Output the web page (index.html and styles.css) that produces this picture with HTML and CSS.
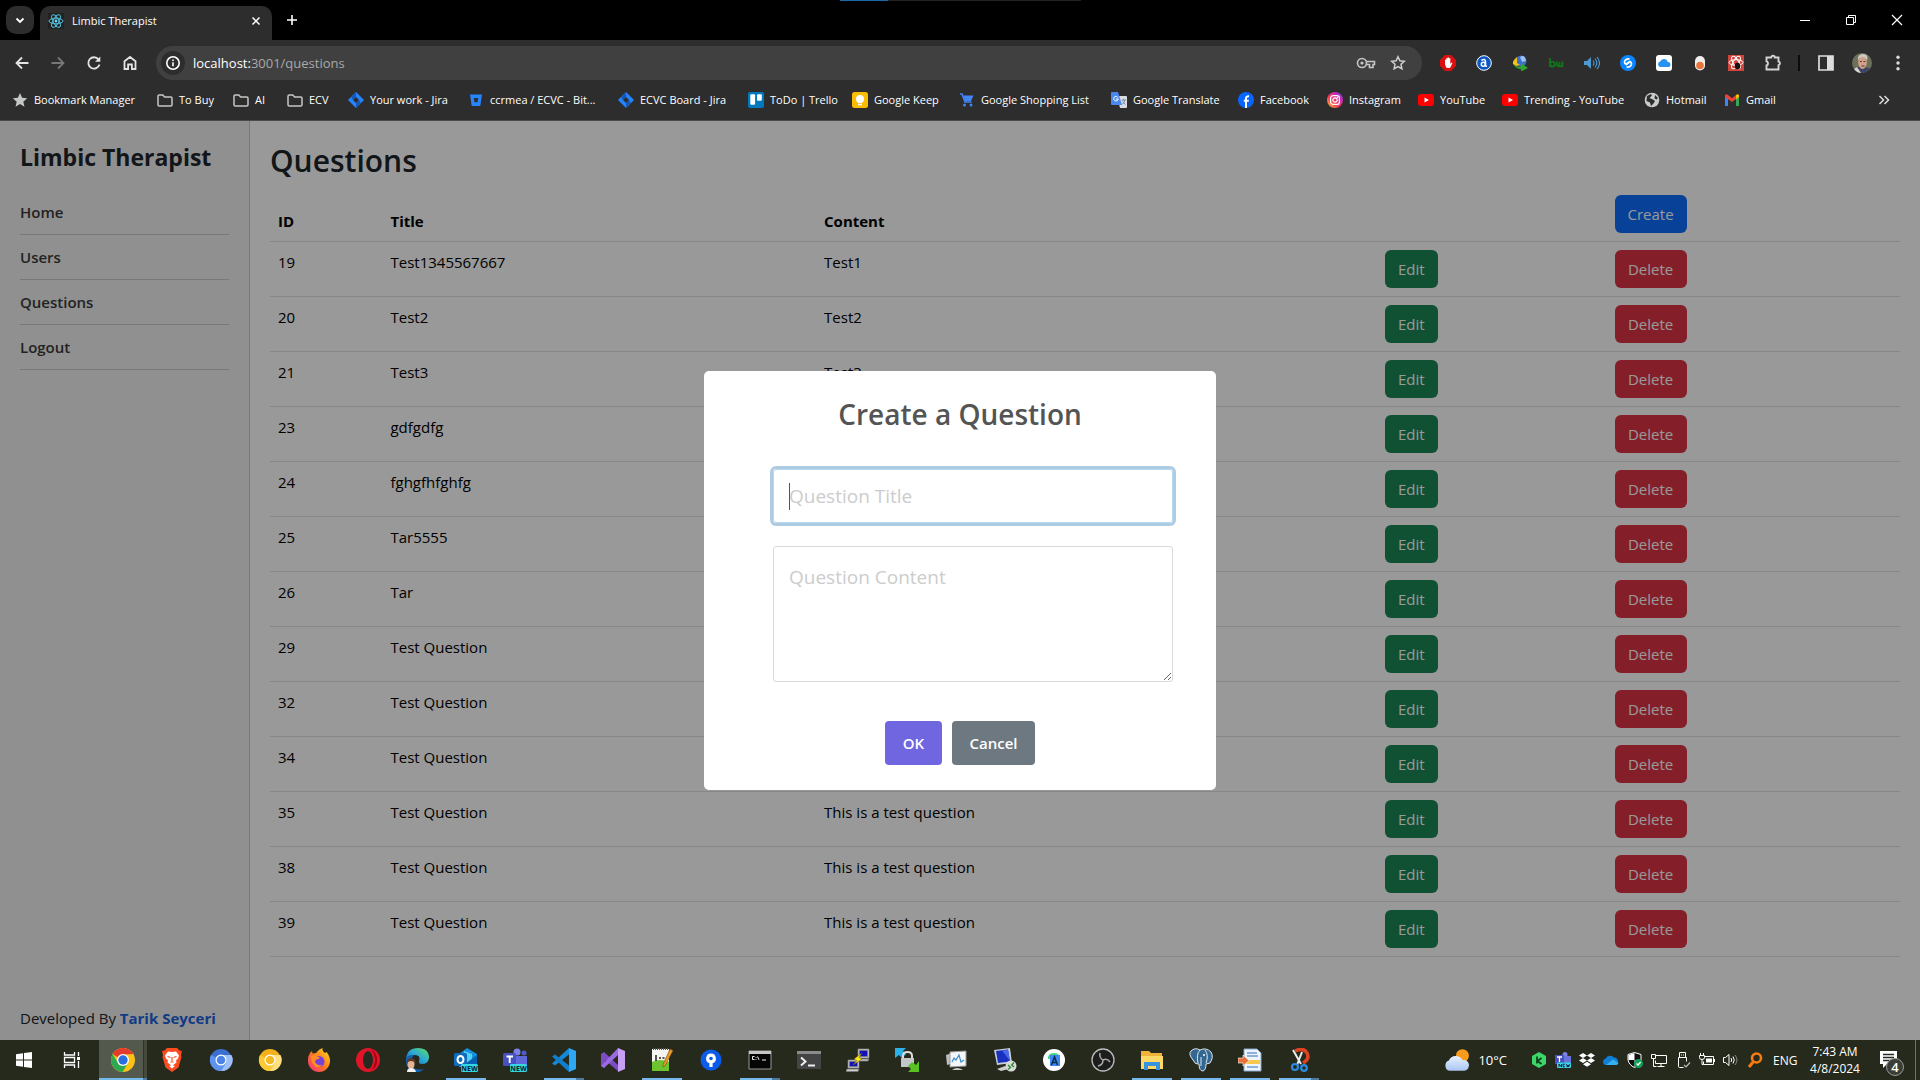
FILE: index.html
```html
<!DOCTYPE html>
<html lang="en">
<head>
<meta charset="utf-8">
<meta name="viewport" content="width=device-width, initial-scale=1">
<title>Limbic Therapist</title>
<link rel="stylesheet" href="styles.css">
</head>
<body>
<svg class="defs" aria-hidden="true">
  <defs>
    <linearGradient id="g-insta" x1="0" y1="1" x2="1" y2="0"><stop offset="0" stop-color="#ffc933"/><stop offset=".4" stop-color="#fb3958"/><stop offset=".7" stop-color="#c72bb0"/><stop offset="1" stop-color="#5b4ff0"/></linearGradient>
    <linearGradient id="g-fox" x1="1" y1="0" x2="0" y2="1"><stop offset="0" stop-color="#ffe226"/><stop offset=".5" stop-color="#ff7a1a"/><stop offset="1" stop-color="#f0288c"/></linearGradient>
    <linearGradient id="g-edge" x1="0" y1="1" x2="1" y2="0"><stop offset="0" stop-color="#0c59a4"/><stop offset=".5" stop-color="#2ba7d8"/><stop offset="1" stop-color="#5fe060"/></linearGradient>
    <linearGradient id="g-cloud" x1="0" y1="0" x2="0" y2="1"><stop offset="0" stop-color="#e8f1ff"/><stop offset="1" stop-color="#a9c4f2"/></linearGradient>
    <symbol id="i-folder" viewBox="0 0 16 16"><path d="M1 4.2Q1 3 2.2 3h3.6l1.8 2h6.2Q15 5 15 6.200v6.600Q15 14 13.800 14H2.200Q1 14 1 12.800Z" fill="none" stroke="#c4c7c5" stroke-width="1.500"/></symbol>
    <symbol id="i-jira" viewBox="0 0 16 16"><path d="M8 0l8 8-8 8-8-8z" fill="#2684ff"/><path d="M8 0v5L5 8 3 5z" fill="#1558bc"/><path d="M8 16v-5l3-3 2 3z" fill="#1558bc"/><path d="M8 5l3 3-3 3-3-3z" fill="#2d2d2d"/></symbol>
    <symbol id="i-youtube" viewBox="0 0 16 16"><rect y="2" width="16" height="12" rx="3" fill="#f00"/><path d="M6.500 5.500v5L11 8z" fill="#fff"/></symbol>
    <symbol id="i-chromium" viewBox="0 0 24 24"><circle cx="12" cy="12" r="11" fill="var(--a)"/><path d="M12 12L2 7A11 11 0 0 0 12 23l5-8z" fill="var(--b)"/><path d="M12 7h10.500A11 11 0 0 1 12 23l5-8z" fill="var(--c)"/><circle cx="12" cy="12" r="5.500" fill="#fff"/><circle cx="12" cy="12" r="4.300" fill="var(--d)"/></symbol>
  </defs>
</svg>

<header class="browser">
  <div class="tabstrip">
    <span class="loading-strip"></span>
    <button class="tab-search" aria-label="Search tabs"><svg viewBox="0 0 12 12"><path d="M2.500 4.500L6 8l3.500-3.500" fill="none" stroke="#fff" stroke-width="1.800"/></svg></button>
    <div class="tab">
      <svg class="ico" viewBox="0 0 16 16"><rect width="16" height="16" rx="1" fill="#222"/><g fill="none" stroke="#53c1de" stroke-width="1"><ellipse cx="8" cy="8" rx="7" ry="2.800"/><ellipse cx="8" cy="8" rx="7" ry="2.800" transform="rotate(60 8 8)"/><ellipse cx="8" cy="8" rx="7" ry="2.800" transform="rotate(120 8 8)"/></g><circle cx="8" cy="8" r="1.400" fill="#61dafb"/></svg>
      <span class="tab-title">Limbic Therapist</span>
      <button class="plain" aria-label="Close tab"><svg viewBox="0 0 12 12"><path d="M2.500 2.500l7 7m0-7l-7 7" stroke="#fff" stroke-width="1.500"/></svg></button>
    </div>
    <button class="plain new-tab" aria-label="New tab"><svg viewBox="0 0 12 12"><path d="M6 1v10M1 6h10" stroke="#fff" stroke-width="1.600"/></svg></button>
    <div class="window-controls">
      <button aria-label="Minimize"><svg viewBox="0 0 12 12"><path d="M1 6.500h10" stroke="#fff"/></svg></button>
      <button aria-label="Restore"><svg viewBox="0 0 12 12"><path d="M1.500 3.500h7v7h-7zM3.500 3.500v-2h7v7h-2" fill="none" stroke="#fff"/></svg></button>
      <button aria-label="Close"><svg viewBox="0 0 12 12"><path d="M1 1l10 10M11 1L1 11" stroke="#fff" stroke-width="1.200"/></svg></button>
    </div>
  </div>

  <div class="toolbar">
    <button aria-label="Back"><svg viewBox="0 0 16 16"><path d="M14.500 8H3M8 2.500L2.500 8 8 13.500" fill="none" stroke="#e3e3e3" stroke-width="1.800"/></svg></button>
    <button aria-label="Forward"><svg viewBox="0 0 16 16"><path d="M1.500 8H13M8 2.500L13.500 8 8 13.500" fill="none" stroke="#777" stroke-width="1.800"/></svg></button>
    <button aria-label="Reload"><svg viewBox="0 0 16 16"><path d="M13.500 9.500A5.700 5.700 0 1 1 12.500 4.400" fill="none" stroke="#e3e3e3" stroke-width="1.800"/><path d="M14.300 1.500v5.300H9z" fill="#e3e3e3"/></svg></button>
    <button aria-label="Home"><svg viewBox="0 0 16 16"><path d="M2.500 6.300L8 2l5.500 4.300V14h-3.600V9.500H6.100V14H2.500z" fill="none" stroke="#e3e3e3" stroke-width="1.800"/></svg></button>
    <div class="omnibox">
      <span class="site-info"><svg viewBox="0 0 16 16"><circle cx="8" cy="8" r="6.200" fill="none" stroke="#fff" stroke-width="1.600"/><path d="M8 7.200v4M8 4.500v1.600" stroke="#fff" stroke-width="1.600"/></svg></span>
      <span class="url"><b>localhost:</b>3001/questions</span>
      <svg class="omni-ico key" viewBox="0 0 20 16"><circle cx="6" cy="8" r="4.500" fill="none" stroke="#c7c7c7" stroke-width="1.600"/><circle cx="6" cy="8" r="1.600" fill="#c7c7c7"/><path d="M10 6.500h8.500v3H17v3h-3.500v-3H10" fill="none" stroke="#c7c7c7" stroke-width="1.600"/></svg>
      <svg class="omni-ico" viewBox="0 0 16 16"><path d="M8 1.800l1.900 4 4.400.5-3.300 3 .9 4.400L8 11.500l-3.900 2.200.9-4.400-3.300-3 4.400-.5z" fill="none" stroke="#d0d0d0" stroke-width="1.500"/></svg>
    </div>
    <div class="extensions">
      <svg viewBox="0 0 16 16"><path d="M5 0h6l5 5v6l-5 5H5l-5-5V5z" fill="#d9100f"/><path d="M5 8.500V4.800h1.200V3.200h1.400v-.8H9v.9h1.300V9l1.200-1.500 1 .6L10 13H6.800Q5 11 5 8.500z" fill="#fff"/></svg>
      <svg viewBox="0 0 16 16"><circle cx="8" cy="8" r="7.300" fill="#0b57c2" stroke="#fff"/><circle cx="7.300" cy="9.300" r="2" fill="none" stroke="#fff" stroke-width="1.500"/><path d="M5.300 5.300Q9.300 3 9.500 6.500V11l1.500.3" fill="none" stroke="#fff" stroke-width="1.500"/></svg>
      <svg viewBox="0 0 16 16"><circle cx="9" cy="6" r="5.500" fill="#3b6fc4"/><path d="M8 2q5-3 6 4l-4 1z" fill="#9cc0ef"/><path d="M5 2Q0 6 1 9l3 2 4-1-3-2z" fill="#f4c21f"/><path d="M1 9q5 4 8 2V8l7 5-7 3.500V14Q4 14 1 9z" fill="#2fa62f"/></svg>
      <svg viewBox="0 0 16 16"><g fill="none" stroke="#12751a" stroke-width="1.800"><path d="M2 3v9"/><circle cx="4.500" cy="9.200" r="2.300"/><path d="M8.800 6.500v3Q9 11.500 11.500 11.300V7v3q.3 1.500 3 1.200V6.500"/></g></svg>
      <svg viewBox="0 0 16 16"><path d="M0 6h3l4-4v12l-4-4H0z" fill="#4c9ad4"/><path d="M9 5.500q2 2.500 0 5M11 3.500q3.500 4.500 0 9M13 2q5 6 0 12" fill="none" stroke="#4c9ad4" stroke-width="1.100"/></svg>
      <svg viewBox="0 0 16 16"><circle cx="8" cy="8" r="8" fill="#0a85ff"/><path d="M9.500 4Q6.500 3.500 4.800 5.800 3.800 8.300 6.300 9.500L9 7.500M6.500 12q3 .5 4.700-1.800Q12.200 7.700 9.700 6.500L7 8.500" fill="none" stroke="#fff" stroke-width="1.600"/></svg>
      <svg viewBox="0 0 16 16"><rect width="16" height="16" rx="3" fill="#fff"/><path d="M4.500 12a2.800 2.800 0 0 1-.3-5.500A4 4 0 0 1 11.800 7a2.500 2.500 0 0 1 .2 5z" fill="#2793f2"/></svg>
      <svg viewBox="0 0 16 16"><rect x="3" y="1" width="10" height="14.500" rx="5" fill="#eee"/><circle cx="8" cy="10.500" r="3.800" fill="#e8763a"/></svg>
      <svg viewBox="0 0 16 16"><path d="M0 0h16v16H0z" fill="#d0463d"/><g fill="none" stroke="#fff"><ellipse cx="8" cy="7.500" rx="7" ry="2.800"/><ellipse cx="8" cy="7.500" rx="7" ry="2.800" transform="rotate(60 8 7.500)"/><ellipse cx="8" cy="7.500" rx="7" ry="2.800" transform="rotate(120 8 7.500)"/></g><ellipse cx="9.500" cy="11" rx="2.800" ry="3.300" fill="#1d1010"/></svg>
      <svg class="puzzle" viewBox="0 0 18 18"><path d="M2.500 3.500h4.700a1.800 1.800 0 0 1 3.600 0h3.700v4a1.900 1.900 0 0 1 0 3.700v4.300h-12v-4a2.200 2.200 0 0 0 0-4.200z" fill="none" stroke="#d3d3d3" stroke-width="1.900"/></svg>
    </div>
    <span class="divider"></span>
    <div class="profile">
      <svg viewBox="0 0 16 16"><path d="M1 1h14v14H1z" fill="none" stroke="#ddd" stroke-width="1.700"/><path d="M9 1h6v14H9z" fill="#ddd"/></svg>
      <svg class="avatar" viewBox="0 0 20 20"><circle cx="10" cy="10" r="10" fill="#6f7059"/><path d="M2 16q3-3 7-2l9 1q-3 5-8 5t-8-4z" fill="#3d4566"/><path d="M5 14l4 6q-4 0-7-4z" fill="#d9d4cc"/><ellipse cx="10.500" cy="9.500" rx="4.300" ry="6.500" fill="#d0a08a"/><path d="M6 8Q5 1 11 1t4 7q-1-4-4.500-4T6 8z" fill="#cfcac2"/><path d="M8 8.500h1.800M11.500 8.500h1.800M9.500 13h3" stroke="#5a3629"/></svg>
      <svg viewBox="0 0 16 16"><g fill="#ddd"><circle cx="8" cy="2.300" r="1.700"/><circle cx="8" cy="8" r="1.700"/><circle cx="8" cy="13.700" r="1.700"/></g></svg>
    </div>
  </div>

  <nav class="bookmarks" aria-label="Bookmarks">
    <a href="#"><svg class="ico" viewBox="0 0 16 16"><path d="M8 1l2.100 4.800 5.100.5-3.900 3.400 1.200 5.100L8 12.100l-4.500 2.700 1.200-5.100L.8 6.300l5.100-.5z" fill="#c4c7c5"/></svg>Bookmark Manager</a>
    <a href="#"><svg class="ico"><use href="#i-folder"/></svg>To Buy</a>
    <a href="#"><svg class="ico"><use href="#i-folder"/></svg>AI</a>
    <a href="#"><svg class="ico"><use href="#i-folder"/></svg>ECV</a>
    <a href="#"><svg class="ico"><use href="#i-jira"/></svg>Your work - Jira</a>
    <a href="#"><svg class="ico" viewBox="0 0 16 16"><path d="M2 2.500h12L12.300 14H3.700z" fill="#2684ff"/><path d="M5.800 6h4.500l-.8 4.200h-3z" fill="#2d2d2d"/></svg>ccrmea / ECVC - Bit...</a>
    <a href="#"><svg class="ico"><use href="#i-jira"/></svg>ECVC Board - Jira</a>
    <a href="#"><svg class="ico" viewBox="0 0 16 16"><rect width="16" height="16" rx="2" fill="#0079bf"/><rect x="2.300" y="2.300" width="4.800" height="10.500" rx="1" fill="#fff"/><rect x="9" y="2.300" width="4.800" height="6.500" rx="1" fill="#fff"/></svg>ToDo | Trello</a>
    <a href="#"><svg class="ico" viewBox="0 0 16 16"><rect width="16" height="16" rx="2.500" fill="#fbbc04"/><circle cx="8" cy="7" r="4" fill="#fff"/><path d="M6 12h4v1.300H6zM6 9h4v2.300H6z" fill="#fff"/></svg>Google Keep</a>
    <a href="#"><svg class="ico" viewBox="0 0 16 16"><path d="M4 3.500h10.500L12 9H6z" fill="#4285f4"/><path d="M1 2h2l3 8h6.500" fill="none" stroke="#4285f4" stroke-width="1.500"/><circle cx="5.500" cy="13" r="1.500" fill="#4285f4"/><circle cx="12" cy="13" r="1.500" fill="#4285f4"/></svg>Google Shopping List</a>
    <a href="#"><svg class="ico" viewBox="0 0 16 16"><path d="M6 4h9q1 0 1 1v10q0 1-1 1H9z" fill="#d9dce0"/><path d="M1 0h6l4 13H1q-1 0-1-1V1q0-1 1-1z" fill="#4a87f0"/><path d="M7 5.500A2.300 2.300 0 1 0 7.300 7H5" fill="none" stroke="#fff"/><path d="M10.500 8h4.500M12.700 6.800V8M14 8q-1 3-3 4.500M11.500 9.500l3 3" stroke="#6a7a90" fill="none" stroke-width=".8"/></svg>Google Translate</a>
    <a href="#"><svg class="ico" viewBox="0 0 16 16"><circle cx="8" cy="8" r="8" fill="#0866ff"/><path d="M8 16V6.500Q8 4 11 4.300M5.800 8.700h5" fill="none" stroke="#fff" stroke-width="2"/></svg>Facebook</a>
    <a href="#"><svg class="ico" viewBox="0 0 16 16"><circle cx="8" cy="8" r="8" fill="url(#g-insta)"/><g fill="none" stroke="#fff" stroke-width="1.200"><rect x="3.600" y="3.600" width="8.800" height="8.800" rx="2.500"/><circle cx="8" cy="8" r="2.200"/></g><circle cx="10.500" cy="5.400" r=".7" fill="#fff"/></svg>Instagram</a>
    <a href="#"><svg class="ico"><use href="#i-youtube"/></svg>YouTube</a>
    <a href="#"><svg class="ico"><use href="#i-youtube"/></svg>Trending - YouTube</a>
    <a href="#"><svg class="ico" viewBox="0 0 16 16"><circle cx="8" cy="8" r="7.300" fill="#c9cccd"/><path d="M3 4l4-2 1 1.500L5.500 6 9 7.500 11 9l-1.500 2.500L7 14 6 10.500 2.500 9zM11 3l3 3-1.500 1.500-2-1z" fill="#2d2d2d"/></svg>Hotmail</a>
    <a href="#"><svg class="ico" viewBox="0 0 16 16"><path d="M1 4v10h3V7z" fill="#4285f4"/><path d="M15 4v10h-3V7z" fill="#34a853"/><path d="M1 3q1.500-1.500 3 0l4 3.200V10L1 5z" fill="#ea4335"/><path d="M8 6.200L12 3v4L8 10z" fill="#ea4335"/><path d="M12 3q1.500-1.500 3 0v2l-3 2.200z" fill="#fbbc04"/></svg>Gmail</a>
    <button class="plain more" aria-label="More bookmarks"><svg viewBox="0 0 12 12"><path d="M1.500 2L5.500 6l-4 4M6.500 2l4 4-4 4" fill="none" stroke="#ddd" stroke-width="1.500"/></svg></button>
  </nav>
</header>

<div class="page">
  <aside class="sidebar">
    <h2>Limbic Therapist</h2>
    <nav class="menu">
      <a href="#">Home</a>
      <a href="#">Users</a>
      <a href="#">Questions</a>
      <a href="#">Logout</a>
    </nav>
    <p class="credit">Developed By <a href="#">Tarik Seyceri</a></p>
  </aside>

  <main class="content">
    <h1>Questions</h1>
    <table class="table">
      <thead>
        <tr><th class="col-id">ID</th><th class="col-title">Title</th><th class="col-content">Content</th><th class="col-edit"></th><th class="col-delete"><button class="btn create">Create</button></th></tr>
      </thead>
      <tbody>
        <tr><td>19</td><td>Test1345567667</td><td>Test1</td><td><button class="btn edit">Edit</button></td><td><button class="btn delete">Delete</button></td></tr>
        <tr><td>20</td><td>Test2</td><td>Test2</td><td><button class="btn edit">Edit</button></td><td><button class="btn delete">Delete</button></td></tr>
        <tr><td>21</td><td>Test3</td><td>Test3</td><td><button class="btn edit">Edit</button></td><td><button class="btn delete">Delete</button></td></tr>
        <tr><td>23</td><td>gdfgdfg</td><td></td><td><button class="btn edit">Edit</button></td><td><button class="btn delete">Delete</button></td></tr>
        <tr><td>24</td><td>fghgfhfghfg</td><td></td><td><button class="btn edit">Edit</button></td><td><button class="btn delete">Delete</button></td></tr>
        <tr><td>25</td><td>Tar5555</td><td></td><td><button class="btn edit">Edit</button></td><td><button class="btn delete">Delete</button></td></tr>
        <tr><td>26</td><td>Tar</td><td></td><td><button class="btn edit">Edit</button></td><td><button class="btn delete">Delete</button></td></tr>
        <tr><td>29</td><td>Test Question</td><td></td><td><button class="btn edit">Edit</button></td><td><button class="btn delete">Delete</button></td></tr>
        <tr><td>32</td><td>Test Question</td><td></td><td><button class="btn edit">Edit</button></td><td><button class="btn delete">Delete</button></td></tr>
        <tr><td>34</td><td>Test Question</td><td></td><td><button class="btn edit">Edit</button></td><td><button class="btn delete">Delete</button></td></tr>
        <tr><td>35</td><td>Test Question</td><td>This is a test question</td><td><button class="btn edit">Edit</button></td><td><button class="btn delete">Delete</button></td></tr>
        <tr><td>38</td><td>Test Question</td><td>This is a test question</td><td><button class="btn edit">Edit</button></td><td><button class="btn delete">Delete</button></td></tr>
        <tr><td>39</td><td>Test Question</td><td>This is a test question</td><td><button class="btn edit">Edit</button></td><td><button class="btn delete">Delete</button></td></tr>
      </tbody>
    </table>
  </main>

  <div class="backdrop">
    <form class="modal" role="dialog" aria-labelledby="modal-title">
      <h2 id="modal-title">Create a Question</h2>
      <div class="fields">
        <input class="focused" type="text" placeholder="Question Title" aria-label="Question Title">
        <textarea placeholder="Question Content" aria-label="Question Content"></textarea>
      </div>
      <div class="actions">
        <button type="button" class="ok">OK</button>
        <button type="button" class="cancel">Cancel</button>
      </div>
    </form>
  </div>
</div>

<footer class="taskbar">
  <div class="system">
    <button aria-label="Start"><svg viewBox="0 0 24 24"><path d="M4 6.300l7-1v6.200H4zM12 5.100l8-1.100v7.500h-8zM4 12.500h7v6.200l-7-1zM12 12.500h8V20l-8-1.100z" fill="#fff"/></svg></button>
    <button aria-label="Task view"><svg viewBox="0 0 24 24"><path d="M4.500 4v3h10V4M4.500 9.500h10v5h-10zM4.500 20v-3h10v3M18.500 4v4M18.500 13v7" fill="none" stroke="#fff" stroke-width="1.300"/><path d="M17 9h3v3h-3z" fill="#fff"/></svg></button>
  </div>
  <div class="apps">
    <button class="active" aria-label="Chrome"><svg viewBox="0 0 24 24"><circle cx="12" cy="12" r="12" fill="#fbc116"/><path d="M1.600 6A12 12 0 0 1 22.400 6L12 6.500 7 9.500z" fill="#e33b2e"/><path d="M1.600 6A12 12 0 0 0 11.500 24l5.500-9-5 3-5-3z" fill="#2da94f"/><circle cx="12" cy="12" r="6" fill="#fff"/><circle cx="12" cy="12" r="4.700" fill="#2a6fe0"/></svg></button>
    <button aria-label="Brave"><svg viewBox="0 0 24 24"><path d="M7 0h10l2.500 2.500L22 3l-1 4 .5 2-3 10.500L12 24l-6.500-4.500L2.500 9 3 7 2 3l2.500-.5z" fill="#fb4b1f"/><path d="M12 4l4-.5 3 4-1 3-2 2 .5 2L12 18l-4.500-3.500.5-2-2-2-1-3 3-4zM9 18l3-1 3 1-3 2.500z" fill="#fff"/><path d="M7.500 8.500l3 1M16.500 8.500l-3 1M10.500 14h3M12 9v4" stroke="#fb4b1f" stroke-width="1.200"/></svg></button>
    <button aria-label="Chromium"><svg class="chromium-blue"><use href="#i-chromium"/></svg></button>
    <button aria-label="Chrome Canary"><svg class="chromium-gold"><use href="#i-chromium"/></svg></button>
    <button aria-label="Firefox"><svg viewBox="0 0 24 24"><path d="M3 5l2-2 .5 2.500L9 5Q12 1 15.500 0 15 3 18 5l1.500-1Q23 8 23 13A11 11 0 0 1 1 13Q.8 8 3 5z" fill="url(#g-fox)"/><circle cx="12" cy="13.500" r="5.500" fill="#7542d8"/><path d="M4 8q4-2 6 .5l3 1q-1 2-3.500 2Q7 13 9 15.500q3 3 6.500 1Q13 20 9 19 4 16 4 8z" fill="#ff8a2a"/></svg></button>
    <button aria-label="Opera"><svg viewBox="0 0 24 24"><circle cx="12" cy="12" r="12" fill="#e0152a"/><path d="M14 1a12 12 0 0 1 0 22q5-4 5-11T14 1z" fill="#a70014"/><ellipse cx="12" cy="12" rx="5" ry="9" fill="#272b1f"/></svg></button>
    <button aria-label="Edge"><svg viewBox="0 0 24 24"><path d="M1 11Q2 0 13 0t11 10q-1 6-7 6-4 0-3-3 2-6-4-6Q4 7 1 11z" fill="url(#g-edge)"/><path d="M1 11q1-4 8-4-4 4-2 10t12 4Q15 25 10 24 0 21 1 11z" fill="#1162b3"/><ellipse cx="6" cy="16" rx="3.500" ry="4.500" fill="#e5b394"/><path d="M2 16q-1-6 4-6t4.500 6Q9 13 6 13t-4 3z" fill="#5a3a2a"/><path d="M2 24q0-4 4-4t5 4z" fill="#f3f0ee"/></svg></button>
    <button class="open" aria-label="Outlook"><svg viewBox="0 0 24 24"><path d="M5 6l8-6 10 6v13H5z" fill="#1490df"/><path d="M10 3l8 3v10H10z" fill="#50d0f5"/><path d="M23 7v13l-12-4z" fill="#0a5fb5"/><rect y="5" width="13" height="13" rx="1.500" fill="#0f6cbd"/><ellipse cx="6.500" cy="11.500" rx="3" ry="3.600" fill="none" stroke="#fff" stroke-width="2"/><rect x="7" y="16" width="17" height="8" rx="1.500" fill="#35d7e3"/><text x="15.500" y="22.500" class="badge-text">NEW</text></svg></button>
    <button aria-label="Teams"><svg viewBox="0 0 24 24"><circle cx="14" cy="4" r="3.500" fill="#7b83eb"/><circle cx="21" cy="5" r="2.500" fill="#5059c9"/><path d="M9 8h15v10q-2 4-8 3-6 0-7-5z" fill="#5f68d8"/><rect y="5" width="13" height="13" rx="1.500" fill="#4650c0"/><path d="M3.500 8.500h6.500M6.700 8.500V15" stroke="#fff" stroke-width="1.900"/><rect x="7" y="16" width="17" height="8" rx="1.500" fill="#35d7e3"/><text x="15.500" y="22.500" class="badge-text">NEW</text></svg></button>
    <button class="open multi" aria-label="Visual Studio Code"><svg viewBox="0 0 24 24"><path d="M17 0v6.500L3 17.500 0 15.500z" fill="#1688d6"/><path d="M17 24v-6.500L3 6.500 0 8.500z" fill="#0f7fce"/><path d="M17 0l7 3v18l-7 3z" fill="#2fa8f3"/></svg></button>
    <button aria-label="Visual Studio"><svg viewBox="0 0 24 24"><path d="M0 6l3-2 15 14v6L4 12v8l-4-2z" fill="#7b4cc4"/><path d="M0 18L17 0v7L3 20z" fill="#9a6ae0"/><path d="M17 0l7 3v18l-7 3z" fill="#c7a0f5"/></svg></button>
    <button class="open" aria-label="Notepad++"><svg viewBox="0 0 24 24"><path d="M2 1h17v22H2z" fill="#f4f6ef"/><path d="M2 14q8-4 17 0v9H2z" fill="#6cc52e"/><path d="M3 1h15" stroke="#555" stroke-width="2" stroke-dasharray="1 1"/><path d="M6 7v6M9 10h2M12.500 10h2" stroke="#222" stroke-width="1.500"/><path d="M20 1l3 1.500L15 18l-2 1v-2.500z" fill="#e99a2b" stroke="#7a4c14" stroke-width=".6"/></svg></button>
    <button aria-label="Sourcetree"><svg viewBox="0 0 24 24"><circle cx="12" cy="12" r="10.500" fill="#0b5ce8"/><path d="M12 5.500a5 5 0 0 1 1.600 9.700V19h-3.200v-3.800A5 5 0 0 1 12 5.500z" fill="#fff"/><circle cx="12" cy="10.500" r="1.800" fill="#0b5ce8"/></svg></button>
    <button class="open multi" aria-label="Command Prompt"><svg viewBox="0 0 24 24"><path d="M1 3h22v18H1z" fill="#050505" stroke="#999"/><path d="M1 3h22v3H1z" fill="#c5c5c5"/><path d="M6.500 8.500H4.500v3h2M8 9v.8M8 11v.8M9.500 8.500l1.500 3.300M14 12h4" fill="none" stroke="#eee"/></svg></button>
    <button aria-label="Terminal"><svg viewBox="0 0 24 24"><path d="M0 3h24v18H0z" fill="#444"/><path d="M0 3h24v3H0z" fill="#8b8b8b"/><path d="M4 9.500l4.500 4-4.500 4M11 17.500h7" fill="none" stroke="#eee" stroke-width="2"/></svg></button>
    <button aria-label="PuTTY"><svg viewBox="0 0 24 24"><g stroke="#777" stroke-width=".8"><path d="M12 1h11v9H12z" fill="#ddd"/><path d="M13.500 2.500h8v6h-8z" fill="#1212b8"/><path d="M14 11h9l-1 2H13z" fill="#ccc"/><path d="M2 12h11v8H2z" fill="#ddd"/><path d="M3.500 13.500h8v5h-8z" fill="#1212b8"/><path d="M1 21h12l-1 2.500H0z" fill="#ccc"/></g><path d="M16 5l-8 6 3 1.500L7 17l9-6-3-1.500z" fill="#ffec1a" stroke="#665c00" stroke-width=".5"/></svg></button>
    <button aria-label="WinSCP"><svg viewBox="0 0 24 24"><path d="M0 0h11L8 3l3 3-4 4-3-3-4 3z" fill="#2cb0e8"/><path d="M8 11V8q0-4 4.500-4T17 8v3" fill="none" stroke="#ddd" stroke-width="2"/><path d="M6 10h13v9H6z" fill="#c4c7ca"/><path d="M24 24H13l3-3-3-3 4-4 4 3 3-4z" fill="#58c322"/></svg></button>
    <button aria-label="Resource Monitor"><svg viewBox="0 0 24 24"><path d="M2 7l12-4 2 10-13 4z" fill="#bdbfc2"/><path d="M6 4l16-1v15L6 19z" fill="#f4f6f8" stroke="#999"/><path d="M8 14l2-4 2 2 3-5 2 7 3-2" fill="none" stroke="#3a8fd0" stroke-width="1.200"/><path d="M8 22q5-4 11 0z" fill="#ccc"/></svg></button>
    <button aria-label="Remote Desktop"><svg viewBox="0 0 24 24"><path d="M1 2l16-2 2 15-15 2z" fill="#c9ced6"/><path d="M3 3l12-1.500L17 13.500 5 15z" fill="#1730c0"/><path d="M9 2.500l6-1L17 13z" fill="#4968e8"/><path d="M4 21l8-3 4 3-8 2z" fill="#ccc"/><circle cx="18" cy="18" r="5.500" fill="#d8dcd8"/><path d="M15 17l2.500 2.500-2.500 2M21 14.500L18.700 17l2.300 2" fill="none" stroke="#2f8a2f" stroke-width="1.400"/></svg></button>
    <button aria-label="Android Studio"><svg viewBox="0 0 24 24"><circle cx="12" cy="12" r="11" fill="#fff"/><path d="M6 9q1-4 6-4t6 4v2H6z" fill="#3ddc84"/><path d="M8 7h10v11H8z" fill="#4285f4"/><path d="M9.500 17l3-8 3 8M10.500 14.500h4" fill="none" stroke="#073042" stroke-width="1.500"/></svg></button>
    <button aria-label="OBS Studio"><svg viewBox="0 0 24 24"><circle cx="12" cy="12" r="11" fill="#1d1d1d" stroke="#bbb" stroke-width="1.300"/><g fill="none" stroke="#aaa" stroke-width="1.500"><path d="M12 12Q8 10 9 5M12 12q4-2 7 2M12 12q0 5-5 6"/></g></svg></button>
    <button class="open" aria-label="File Explorer"><svg viewBox="0 0 24 24"><path d="M1 3h8l2 2h11v16H1z" fill="#eeb33a"/><path d="M1 8h22v13H1z" fill="#ffd868"/><path d="M4 22v-8h16v8h-4v-4H8v4z" fill="#3793dd"/></svg></button>
    <button class="open" aria-label="PostgreSQL"><svg viewBox="0 0 24 24"><path d="M2 3Q6-1 11 2q6-3 11 2 3 5-1 11l-4 1q0 6-3 7-4 0-4-7-4 1-6-4Q-1 6 2 3z" fill="#336791" stroke="#dfe8ef"/><path d="M11 2q-4 4-2 13M16 2q4 5 1 13M12 9v9" fill="none" stroke="#dfe8ef"/><circle cx="15" cy="7" r="1" fill="#fff"/></svg></button>
    <button class="open" aria-label="File transfer"><svg viewBox="0 0 24 24"><path d="M6 1h13l4 4v18H6z" fill="#eef4fb" stroke="#86a9cf"/><path d="M9 5h10M9 8h11M9 19h11" stroke="#6d9bd0" stroke-width="1.500"/><path d="M7 12h15v4H7z" fill="#f7c84c"/><path d="M0 10h5V7l6 5.500L5 18v-3H0z" fill="#e9703a" stroke="#fff" stroke-width=".6"/></svg></button>
    <button class="open multi" aria-label="Snipping tool"><svg viewBox="0 0 24 24"><path d="M8 3Q17-1 20 5t-4 10" fill="none" stroke="#dd4322" stroke-width="3.500"/><path d="M6 2l8 14M15 4l-5 13" stroke="#e9edf0" stroke-width="2"/><circle cx="8" cy="19" r="3" fill="none" stroke="#2b8ce0" stroke-width="2.200"/><circle cx="17" cy="20" r="2.800" fill="none" stroke="#2b8ce0" stroke-width="2.200"/></svg></button>
  </div>
  <div class="weather">
    <svg viewBox="0 0 24 24"><circle cx="17" cy="8" r="6" fill="#f99b1d"/><path d="M5 22a5 5 0 0 1-.5-9.500A7 7 0 0 1 17 12a5 5 0 0 1 2 10z" fill="url(#g-cloud)"/></svg>
    <span>10°C</span>
  </div>
  <div class="tray">
    <svg viewBox="0 0 16 16"><path d="M8 0l7 4v8l-7 4-7-4V4z" fill="#3dd668"/><path d="M6 4.500v7M10.500 6L6.500 9l4 3" fill="none" stroke="#0c3a1a" stroke-width="1.700"/></svg>
    <svg viewBox="0 0 16 16"><circle cx="10" cy="2.500" r="2.500" fill="#7b83eb"/><path d="M6 4h10v8H6z" fill="#6a72dc"/><path d="M0 3h9v9H0z" fill="#4650c0"/><path d="M2 5h5M4.500 5v5" stroke="#fff" stroke-width="1.300"/><rect x="2" y="10.500" width="14" height="5.500" rx="1" fill="#35d7e3"/><path d="M4 15v-3l2.500 3v-3M10 12.200H8v2.600h2M11.500 12l.8 3 .7-2 .7 2 .8-3" fill="none" stroke="#103" stroke-width=".8"/></svg>
    <svg viewBox="0 0 16 16"><path d="M4 1l4 2.500L4 6 0 3.500zM12 1l4 2.500L12 6 8 3.500zM4 6l4 2.500L4 11 0 8.500zM12 6l4 2.500-4 2.500-4-2.500zM8 9.800l4 2.400L8 14.700l-4-2.500z" fill="#fff"/></svg>
    <svg viewBox="0 0 16 16"><path d="M3 13a3.300 3.300 0 0 1-.3-6.500A5 5 0 0 1 11 5.500 4 4 0 0 1 13 13z" fill="#0f7fd6"/><path d="M3 13l7-5.500 5.500 3.500Q15 13 13 13z" fill="#35b1f3"/></svg>
    <svg viewBox="0 0 16 16"><path d="M7.500.5l6.500 2V8q-1 5-6.500 7.500Q2 13 1 8V2.500z" fill="#111" stroke="#fff"/><path d="M7.500 1v7H1.500V3zM7.500 8h6q-1 4.500-6 7z" fill="#fff"/><circle cx="11.500" cy="11.500" r="4.500" fill="#13a05a"/><path d="M9.500 11.500l1.500 1.500 2.700-3" fill="none" stroke="#fff" stroke-width="1.300"/></svg>
    <svg viewBox="0 0 16 16"><path d="M4.500 3.500h11v8h-11v-3M10 11.500v3M6.500 14.500h7M.5 2.500h4v4h-4zM2.500 6.500v8h3" fill="none" stroke="#fff"/></svg>
    <svg viewBox="0 0 16 16"><path d="M4.500 5.500v-5h6v5M3.500 5.500h8v4M3.500 5.500v9q0 1 1 1h4M6.500 2.500v1M8.500 2.500v1" fill="none" stroke="#fff"/><path d="M9 13l2 2 4-4.500" fill="none" stroke="#bbb" stroke-width="1.200"/></svg>
    <svg viewBox="0 0 16 16"><path d="M5.500 4.500h9v8h-10V9.500M15.500 7v3M1.500 1v3M4.500 1v3M.500 3.500h5v2q0 2-2.500 2t-2.500-2zM3 7.500v5h1.500" fill="none" stroke="#fff"/><path d="M7 6.500h6v4H7z" fill="#fff"/></svg>
    <svg viewBox="0 0 16 16"><path d="M.5 5.500h2l3.500-3v11l-3.500-3h-2z" fill="none" stroke="#fff"/><path d="M8 6q1.500 2 0 4M10 4.500q2.500 3.500 0 7" fill="none" stroke="#fff"/><path d="M12 3q4 5 0 10" fill="none" stroke="#888"/></svg>
    <svg viewBox="0 0 16 16"><circle cx="9.500" cy="6" r="4.500" fill="none" stroke="#f77b0e" stroke-width="2.600"/><path d="M6.500 9.500L2 15" stroke="#f77b0e" stroke-width="3"/></svg>
  </div>
  <span class="lang">ENG</span>
  <div class="clock"><span>7:43 AM</span><span>4/8/2024</span></div>
  <button class="notifications" aria-label="4 notifications">
    <svg viewBox="0 0 24 24"><path d="M1 3h17v13H8l-4 4v-4H1z" fill="#fff"/><path d="M4 6.500h11M4 9.500h11M4 12.500h8" stroke="#272b1f" stroke-width="1.300"/></svg>
    <span class="count">4</span>
  </button>
  <span class="show-desktop"></span>
</footer>
</body>
</html>
```
FILE: styles.css
```css
* { box-sizing: border-box; }

body {
  margin: 0;
  min-height: 100vh;
  display: grid;
  grid-template-rows: auto 1fr auto;
  grid-template-columns: minmax(0, 1fr);
  font-family: "Open Sans", "Noto Sans", sans-serif;
  font-size: 15px;
  line-height: 24px;
  color: #212529;
}

button { font: inherit; border: 0; padding: 0; background: none; color: inherit; }
a { text-decoration: none; color: inherit; }
svg { display: block; flex: none; }
.defs { position: absolute; width: 0; height: 0; }
.ico { width: 16px; height: 16px; }
.plain svg { width: 12px; height: 12px; }

/* Browser frame */
.browser { background: #2d2d2d; color: #fff; font-size: 11px; line-height: 16px; border-bottom: 1px solid #4a4a4a; }

.tabstrip { position: relative; display: flex; align-items: flex-start; height: 40px; padding: 6px 0 0 6px; background: #000; }
.loading-strip { position: absolute; top: 0; left: 840px; width: 241px; height: 1px; background: linear-gradient(90deg, #1b6aa8 48px, #222 48px); }
.tab-search { width: 28px; height: 28px; border-radius: 10px; background: #2d2d2d; display: grid; place-items: center; }
.tab-search svg { width: 12px; height: 12px; }
.tab { display: flex; align-items: center; gap: 8px; width: 232px; height: 34px; margin-left: 6px; padding: 0 10px 4px 8px; border-radius: 10px 10px 0 0; background: #2d2d2d; }
.tab-title { flex: 1; }
.new-tab { margin: 8px 0 0 14px; }
.window-controls { margin-left: auto; display: flex; }
.window-controls button { width: 46px; height: 28px; display: grid; place-items: center; }
.window-controls svg { width: 12px; height: 12px; }

.toolbar { display: flex; align-items: center; height: 46px; padding-left: 4px; }
.toolbar > button { width: 36px; height: 34px; display: grid; place-items: center; }
.toolbar > button svg { width: 16px; height: 16px; }
.omnibox { flex: 1; display: flex; align-items: center; height: 34px; margin-left: 8px; padding: 0 16px 0 5px; border-radius: 17px; background: #404040; font-size: 13px; }
.site-info { width: 24px; height: 24px; border-radius: 50%; background: #2d2d2d; display: grid; place-items: center; }
.site-info svg { width: 16px; height: 16px; }
.url { flex: 1; margin-left: 8px; color: #a9a9a9; }
.url b { font-weight: 400; color: #fff; }
.omni-ico { width: 16px; height: 16px; }
.omni-ico.key { width: 20px; margin-right: 14px; }
.extensions { display: flex; gap: 20px; margin-left: 18px; }
.extensions svg { width: 16px; height: 16px; }
.extensions .puzzle { width: 18px; height: 18px; margin-top: -1px; }
.divider { width: 2px; height: 16px; margin: 0 18px 0 16px; background: #0c0c0c; }
.profile { display: flex; align-items: center; gap: 18px; padding-right: 14px; }
.profile svg { width: 16px; height: 16px; }
.profile .avatar { width: 20px; height: 20px; }

.bookmarks {
  display: grid;
  grid-template-columns: 145px 76px 54px 61px 120px 150px 130px 104px 107px 152px 127px 89px 91px 84px 142px 80px 1fr auto;
  align-items: center;
  height: 34px;
  padding: 0 30px 6px 12px;
}
.bookmarks a { display: flex; align-items: center; gap: 6px; white-space: nowrap; }

/* Application */
.page { position: relative; display: flex; background: #fff; }

.sidebar { width: 250px; padding: 20px; display: flex; flex-direction: column; background: #f0f0f0; border-right: 1px solid #c8c8c8; }
.sidebar h2 { margin: 0 0 27px; font-size: 23px; line-height: 32px; font-weight: 700; white-space: nowrap; }
.menu a { display: block; padding: 10px 0; border-bottom: 1px solid #c8c8c8; font-weight: 600; color: #3a3a3a; }
.menu a:first-child { padding-top: 0; }
.credit { margin: auto 0 -10px; white-space: nowrap; }
.credit a { font-weight: 700; color: #1d63dd; }

.content { flex: 1; padding: 20px; }
h1 { margin: 0 0 5px; font-size: 30px; line-height: 40px; font-weight: 600; }

.table { width: 100%; border-collapse: collapse; color: #000; }
.table th, .table td { height: 55px; padding: 8px; text-align: left; vertical-align: top; border-bottom: 1px solid #dee2e6; }
.table th { vertical-align: bottom; font-weight: 700; }
.col-id { width: 6.9%; }
.col-title { width: 26.6%; }
.col-content { width: 34.4%; }
.col-edit { width: 14.1%; }

.btn { display: block; height: 38px; padding: 0 12px; border-radius: 6px; font-weight: 400; color: #fff; }
.create, .delete { width: 72px; }
.create { background: #0d6efd; }
.edit { width: 53px; background: #198754; }
.delete { background: #dc3545; }

/* Dialog */
.backdrop { position: absolute; inset: 0; display: grid; place-items: center; background: rgba(0, 0, 0, .4); }
.modal { width: 512px; padding: 23px 0 25px; border-radius: 5px; background: #fff; color: #545454; }
.modal h2 { margin: 0; font-size: 28px; line-height: 40px; font-weight: 600; text-align: center; }
.fields { display: flex; flex-direction: column; gap: 23px; margin: 35px 43px 0 69px; }
.fields input, .fields textarea { width: 100%; border: 1px solid #d9d9d9; border-radius: 3px; padding: 0 15px; font: inherit; font-size: 19px; line-height: 30px; color: #545454; background: #fff; }
.fields input { height: 54px; }
.fields textarea { display: block; height: 136px; padding: 15px; resize: vertical; }
.fields ::placeholder { color: #ccc; }
.fields .focused { border-color: #b4dbed; box-shadow: 0 0 0 3px #afcbe3; background: linear-gradient(#545454, #545454) 15px center / 1px 27px no-repeat; }
.actions { display: flex; justify-content: center; gap: 10px; margin-top: 39px; }
.actions button { height: 44px; border-radius: 4px; color: #fff; font-weight: 600; }
.ok { width: 57px; background: #7066e0; }
.cancel { width: 83px; background: #6e7881; }

/* Taskbar */
.taskbar { display: flex; align-items: center; height: 40px; background: #252a1d; color: #fff; font-size: 12px; line-height: 17px; }
.taskbar button { display: grid; place-items: center; height: 40px; }
.system { display: flex; margin-right: 3px; }
.system button { width: 48px; }
.system svg { width: 24px; height: 24px; }
.apps { display: flex; gap: 1px; }
.apps button { width: 48px; }
.apps svg { width: 24px; height: 24px; }
.apps .active { background: linear-gradient(90deg, #76b9ed 44px, #4d7ba0 44px) center bottom / 48px 2px no-repeat, linear-gradient(90deg, #53594c 44px, #2f342a 44px, #2f342a 45px, #454a3e 45px); }
.apps .open { background: linear-gradient(#76b9ed, #76b9ed) center bottom / 40px 2px no-repeat; }
.apps .open.multi { background: linear-gradient(90deg, #76b9ed 32px, #4d7ba0 32px) center bottom / 40px 2px no-repeat; }
.badge-text { font-size: 7px; font-weight: 700; text-anchor: middle; fill: #08202c; }
.chromium-blue { --a: #3b6fd0; --b: #5d93ee; --c: #9dc0fa; --d: #4a84e8; }
.chromium-gold { --a: #f2b11b; --b: #fcc934; --c: #ffdf80; --d: #f5b921; }
.weather { margin-left: auto; display: flex; align-items: center; gap: 8px; }
.weather svg { width: 26px; height: 26px; }
.weather span { font-size: 13px; }
.tray { display: flex; gap: 8px; margin-left: 24px; }
.tray svg { width: 16px; height: 16px; }
.lang { width: 36px; margin-left: 10px; }
.clock { width: 64px; margin-left: -6px; text-align: center; display: flex; flex-direction: column; white-space: nowrap; }
.taskbar .notifications { position: relative; width: 48px; }
.notifications svg { width: 24px; height: 24px; }
.count { position: absolute; right: 11px; bottom: 4px; width: 18px; height: 18px; border: 1px solid #999; border-radius: 50%; background: #3a3e34; font-size: 13px; font-weight: 600; line-height: 16px; }
.show-desktop { width: 5px; height: 40px; border-left: 1px solid #6d7167; }
```
